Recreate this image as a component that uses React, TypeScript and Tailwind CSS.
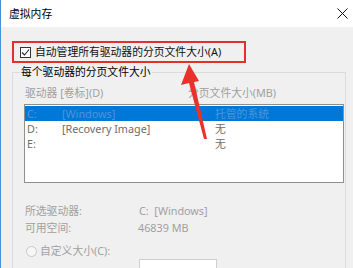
import React from "react";

const font = { fontFamily: '"Noto Sans", "Noto Sans CJK SC", sans-serif' };

const rows = [
  { drive: "C:", label: "[Windows]", size: "托管的系统", selected: true },
  { drive: "D:", label: "[Recovery Image]", size: "无", selected: false },
  { drive: "E:", label: "", size: "无", selected: false },
];

const App = () => {
  return (
    <div
      className="relative w-[353px] h-[268px] overflow-hidden bg-[#f0f0f0] border-l border-[#4a90d9] text-[10.8px]"
      style={font}
    >
      {/* title bar */}
      <div className="h-[27px] bg-white flex items-center justify-between pl-[8px] pr-[5px]">
        <span className="leading-[14px] text-[#000]">虚拟内存</span>
        <svg width="11" height="11" viewBox="0 0 11 11" className="shrink-0">
          <path d="M0.5 0.5 L10.5 10.5 M10.5 0.5 L0.5 10.5" stroke="#111" strokeWidth="1" />
        </svg>
      </div>

      <div className="pl-[11px] pr-[6px] pt-[14px]">
        {/* highlighted checkbox row */}
        <div className="w-[234px] h-[22px] border-2 border-[#e3302b] flex items-center pl-[6px] gap-[4px]">
          <div className="shrink-0 w-[11px] h-[11px] border border-[#333] bg-white flex items-center justify-center">
            <svg width="9" height="9" viewBox="0 0 9 9">
              <path d="M1 4.5 L3.5 7 L8 1.5" stroke="#222" strokeWidth="1.1" fill="none" />
            </svg>
          </div>
          <span className="whitespace-nowrap leading-[14px] text-[#111]">自动管理所有驱动器的分页文件大小(A)</span>
        </div>

        {/* group box */}
        <fieldset className="mt-[2px] w-[334px] border border-[#dcdcdc] pl-[11px] pr-[1px]">
          <legend className="ml-[-4px] px-[1px] leading-[14px] text-[#000]">每个驱动器的分页文件大小</legend>

          <div className="mt-[7px] flex leading-[14px] text-[#a0a0a0] pl-[1px]">
            <span className="w-[163px]">驱动器 [卷标](D)</span>
            <span>分页文件大小(MB)</span>
          </div>

          <div className="mt-[4px] h-[79px] border border-[#8f8f8f] bg-white pt-[1px]">
            {rows.map((r) => (
              <div
                key={r.drive}
                className={
                  r.selected
                    ? "h-[15px] flex items-center bg-[#0078d7] text-[#4d94dc] pl-[2px]"
                    : "h-[15px] flex items-center text-[#6d6d6d] pl-[2px]"
                }
              >
                <span className="w-[35px] leading-[14px]">{r.drive}</span>
                <span className="w-[153px] leading-[14px]">{r.label}</span>
                <span className="leading-[14px]">{r.size}</span>
              </div>
            ))}
          </div>

          <div className="mt-[20px] pl-[1px] text-[#a0a0a0]">
            <div className="h-[17px] flex items-center">
              <span className="w-[114px]">所选驱动器:</span>
              <span>C:&nbsp;&nbsp;[Windows]</span>
            </div>
            <div className="h-[17px] flex items-center">
              <span className="w-[113px]">可用空间:</span>
              <span>46839 MB</span>
            </div>
          </div>

          <div className="mt-[6px] h-[16px] flex items-center pl-[2px] gap-[3px] text-[#a0a0a0]">
            <div className="shrink-0 w-[11px] h-[11px] rounded-full border border-[#c8c8c8] bg-[#f7f7f7]" />
            <span>自定义大小(C):</span>
          </div>
          <div className="ml-[115px] w-[78px] h-[22px] border border-[#cfcfcf] bg-white" />
        </fieldset>
      </div>

      {/* red arrow */}
      <svg className="absolute left-0 top-0" width="353" height="268" viewBox="0 0 353 268">
        <polygon points="188,64 180,85 188,83 203,139 206,139 193,82 198,81" fill="#e8322b" />
      </svg>
    </div>
  );
};

export default App;
